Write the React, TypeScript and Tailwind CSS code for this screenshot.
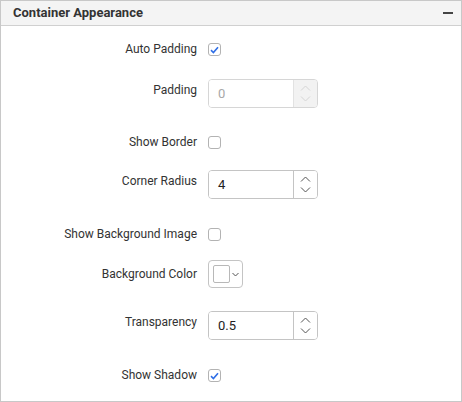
import React from 'react';

const font = { fontFamily: 'Roboto, "Liberation Sans", sans-serif' };

function CheckBox({ checked }: { checked?: boolean }) {
  return (
    <div className="w-[13px] h-[13px] rounded-[3px] border border-[#b3b3b3] bg-white flex items-center justify-center">
      {checked && (
        <svg width="9" height="8" viewBox="0 0 9 8">
          <path d="M1 4.2 L3.4 6.5 L8 1.2" fill="none" stroke="#2f6ee6" strokeWidth="1.6" />
        </svg>
      )}
    </div>
  );
}

function Spinner({ value, disabled }: { value: string; disabled?: boolean }) {
  const stroke = disabled ? '#d4d4d4' : '#555';
  return (
    <div
      className={`w-[110px] h-[29px] rounded-[4px] border flex overflow-hidden ${
        disabled ? 'border-[#d6d6d6]' : 'border-[#c4c4c4]'
      }`}
    >
      <div
        className={`flex-1 flex items-center pl-[9px] text-[13px] ${
          disabled ? 'text-[#a8a8a8] bg-white' : 'text-[#222] bg-white'
        }`}
      >
        {value}
      </div>
      <div
        className={`w-[24px] border-l flex flex-col items-center justify-center gap-[5px] ${
          disabled ? 'bg-[#f2f2f2] border-[#e2e2e2]' : 'bg-white border-[#c4c4c4]'
        }`}
      >
        <svg width="11" height="6" viewBox="0 0 11 6">
          <path d="M1 5.5 L5.5 1 L10 5.5" fill="none" stroke={stroke} strokeWidth="1" />
        </svg>
        <svg width="11" height="6" viewBox="0 0 11 6">
          <path d="M1 0.5 L5.5 5 L10 0.5" fill="none" stroke={stroke} strokeWidth="1" />
        </svg>
      </div>
    </div>
  );
}

function ColorPicker() {
  return (
    <div className="w-[35px] h-[28px] rounded-[4px] border border-[#c4c4c4] flex items-center pl-[4px] gap-[2px]">
      <div className="w-[17px] h-[18px] rounded-[2px] border border-[#b8b8b8] bg-white" />
      <svg width="7" height="5" viewBox="0 0 7 5">
        <path d="M0.5 1 L3.5 4 L6.5 1" fill="none" stroke="#555" strokeWidth="1" />
      </svg>
    </div>
  );
}

function Row({
  label,
  children,
  className,
  top,
}: {
  label: string;
  children: React.ReactNode;
  className: string;
  top?: boolean;
}) {
  return (
    <div className={`flex ${top ? 'items-start' : 'items-center'} ${className}`}>
      <div
        className={`w-[196px] text-right text-[12px] leading-[15px] text-[#333] ${top ? 'pt-[4px]' : ''}`}
      >
        {label}
      </div>
      <div className="ml-[11px]">{children}</div>
    </div>
  );
}

export default function App() {
  return (
    <div className="w-[462px] h-[402px] bg-white" style={font}>
      <div className="w-full h-full border border-[#c8c8c8] flex flex-col">
        <div className="h-[25px] bg-[#f4f4f4] border-b border-[#d0d0d0] flex items-center justify-between pl-[12px] pr-[8px]">
          <span className="text-[13px] font-bold text-[#333]">Container Appearance</span>
          <div className="w-[10px] h-[1.5px] bg-[#444]" />
        </div>
        <div className="flex flex-col">
          <Row label="Auto Padding" className="mt-[17px] h-[13px]">
            <CheckBox checked />
          </Row>
          <Row label="Padding" className="mt-[23px]" top>
            <Spinner value="0" disabled />
          </Row>
          <Row label="Show Border" className="mt-[28px] h-[13px]">
            <CheckBox />
          </Row>
          <Row label="Corner Radius" className="mt-[21px]" top>
            <Spinner value="4" />
          </Row>
          <Row label="Show Background Image" className="mt-[29px] h-[13px]">
            <CheckBox />
          </Row>
          <Row label="Background Color" className="mt-[19px] h-[28px]">
            <ColorPicker />
          </Row>
          <Row label="Transparency" className="mt-[23px]" top>
            <Spinner value="0.5" />
          </Row>
          <Row label="Show Shadow" className="mt-[29px] h-[13px]">
            <CheckBox checked />
          </Row>
        </div>
      </div>
    </div>
  );
}
